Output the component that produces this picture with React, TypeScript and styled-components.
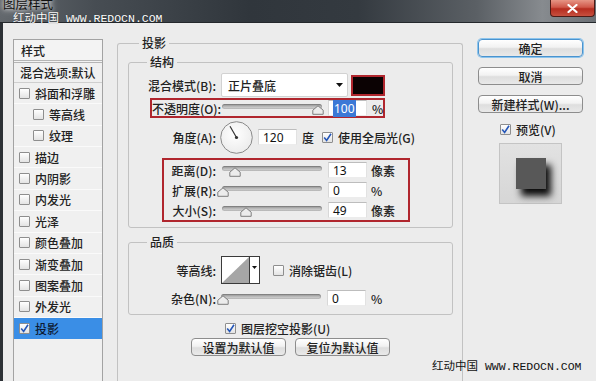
import React from 'react';
import styled, { createGlobalStyle } from 'styled-components';

const FONT = `"Noto Sans CJK SC", "Noto Sans", sans-serif`;

const GlobalStyle = createGlobalStyle`
  html, body { margin: 0; padding: 0; background: #ececec; }
  body { width: 596px; height: 381px; overflow: hidden; font-family: ${FONT}; }
  * { box-sizing: border-box; }
`;

const Window = styled.div`
  position: relative;
  width: 596px;
  height: 381px;
  overflow: hidden;
  display: flex;
  flex-direction: column;
  background: #ececec;
  font-family: ${FONT};
  font-size: 12px;
  color: #222;
`;

const TitleBar = styled.div`
  flex: none;
  height: 23px;
  display: flex;
  justify-content: space-between;
  align-items: flex-start;
  background: linear-gradient(90deg, #63686d 0%, #474d53 16%, #30363c 42%, #343a40 60%, #5b6065 80%, #878b8f 91%, #6b7075 100%);
  border-bottom: 1px solid #24282c;
`;

const TitleText = styled.div`
  margin: -3px 0 0 3px;
  font-size: 12.5px;
  line-height: 14px;
  color: #111;
  text-shadow: 0 0 4px #fff, 0 0 8px rgba(255, 255, 255, 0.8);
`;

const CloseButton = styled.div`
  width: 45px;
  height: 17px;
  margin-right: 1px;
  display: flex;
  align-items: center;
  justify-content: center;
  border: 1px solid #4e1b16;
  border-top: none;
  border-radius: 0 0 4px 4px;
  background: linear-gradient(#e69585 0%, #d0584a 45%, #b62c1f 55%, #c7503f 100%);
`;

const Watermark = styled.div<{ $light?: boolean }>`
  position: absolute;
  white-space: pre;
  font-size: 11.5px;
  line-height: 13px;
  color: ${(p) => (p.$light ? '#fff' : '#111')};
  text-shadow: ${(p) => (p.$light ? '0 0 1px rgba(0,0,0,0.6)' : 'none')};
`;

const MarkCjk = styled.span`
  font-family: "Noto Sans CJK SC", sans-serif;
`;

const MarkLatin = styled.span`
  font-family: "Liberation Mono", monospace;
`;

const Body = styled.div`
  flex: 1;
  min-height: 0;
  display: flex;
  align-items: flex-start;
  border-left: 3px solid #2c3035;
`;

/* ---------- Sidebar ---------- */
const Sidebar = styled.div`
  flex: none;
  width: 90px;
  min-height: 400px;
  margin: 16px 0 0 10px;
  border: 1px solid #a3a3a3;
  background: #f0f0f0;
`;

const SideHeader = styled.div`
  height: 23px;
  padding-left: 7px;
  display: flex;
  align-items: center;
  font-weight: 500;
  border-bottom: 3px double #b5b5b5;
  background: #f3f3f3;
`;

const SideBlend = styled.div`
  height: 20px;
  padding-left: 6px;
  display: flex;
  align-items: center;
  font-weight: 500;
  white-space: nowrap;
  border-bottom: 1px solid #cfcfcf;
`;

const SideItem = styled.div<{ $indent?: boolean; $selected?: boolean }>`
  height: 21.36px;
  padding-left: ${(p) => (p.$indent ? 19 : 5)}px;
  display: flex;
  align-items: center;
  gap: 5px;
  font-weight: 500;
  white-space: nowrap;
  border-bottom: 1px solid ${(p) => (p.$selected ? '#3a8ee6' : '#fafafa')};
  background: ${(p) => (p.$selected ? '#3a8ee6' : 'transparent')};
  color: ${(p) => (p.$selected ? '#0d1a33' : '#222')};
`;

/* ---------- Checkbox ---------- */
const Box = styled.span`
  flex: none;
  width: 11px;
  height: 11px;
  display: inline-flex;
  align-items: center;
  justify-content: center;
  border: 1px solid #8e8e8e;
  border-radius: 1px;
  background: linear-gradient(#ffffff, #e3e3e3);
`;

const Check: React.FC<{ checked?: boolean }> = ({ checked }) => (
  <Box>
    {checked && (
      <svg width="9" height="9" viewBox="0 0 9 9">
        <path d="M1.2 4.6 L3.6 7.4 L8 0.8" fill="none" stroke="#2456b8" strokeWidth="1.6" />
      </svg>
    )}
  </Box>
);

/* ---------- Main area ---------- */
const Main = styled.div`
  flex: none;
  width: 346px;
  margin: 20px 0 0 14px;
`;

const OuterGroup = styled.div`
  display: flex;
  flex-direction: column;
  min-height: 380px;
  padding: 0 9px 0 10px;
  border: 1px solid #c2c2c2;
  border-bottom: none;
  border-radius: 3px 3px 0 0;
`;

const GroupTitle = styled.div<{ $offset: number }>`
  align-self: flex-start;
  height: 16px;
  line-height: 16px;
  margin: -9px 0 0 ${(p) => p.$offset}px;
  padding: 0 3px;
  background: #ececec;
  font-weight: 500;
`;

const InnerGroup = styled.div<{ $top: number; $bottom: number }>`
  display: flex;
  flex-direction: column;
  margin-top: ${(p) => p.$top}px;
  padding-bottom: ${(p) => p.$bottom}px;
  border: 1px solid #c2c2c2;
  border-radius: 3px;
`;

const Row = styled.div<{ $top?: number; $h: number }>`
  display: flex;
  align-items: center;
  height: ${(p) => p.$h}px;
  margin-top: ${(p) => p.$top ?? 0}px;
  white-space: nowrap;
`;

const Label = styled.span<{ $w: number }>`
  flex: none;
  width: ${(p) => p.$w}px;
  text-align: right;
  font-weight: 500;
`;

const Annot = styled.div<{ $left: number; $w: number; $h: number; $top: number }>`
  display: flex;
  flex-direction: column;
  margin: ${(p) => p.$top}px 0 0 ${(p) => p.$left}px;
  width: ${(p) => p.$w}px;
  height: ${(p) => p.$h}px;
  border: 2px solid #b0262e;
`;

const Gap = styled.span<{ $w: number }>`
  flex: none;
  width: ${(p) => p.$w}px;
`;

const Dropdown = styled.div`
  flex: none;
  width: 127px;
  height: 24px;
  display: flex;
  align-items: center;
  justify-content: space-between;
  padding: 0 4px 0 6px;
  background: #fff;
  border: 1px solid #d2d2d2;
  border-radius: 2px;
  font-weight: 500;
`;

const Swatch = styled.div`
  flex: none;
  width: 34px;
  height: 21px;
  border: 2px solid #b0262e;
  background: #0b0203;
`;

const Field = styled.div<{ $w?: number }>`
  flex: none;
  width: ${(p) => p.$w ?? 39}px;
  height: 16px;
  padding-left: 4px;
  line-height: 15px;
  background: #fff;
  border: 1px solid;
  border-color: #bdbdbd #e2e2e2 #ececec #d8d8d8;
  font-family: "Noto Sans", sans-serif;
  font-size: 12px;
  color: #111;
`;

const Selected = styled.span`
  background: #3b78d6;
  color: #fff;
  padding: 0 1px;
`;

const Unit = styled.span`
  font-weight: 500;
`;

const SliderWrap = styled.div`
  flex: none;
  position: relative;
  width: 100px;
  height: 14px;
`;

const Track = styled.div`
  margin-top: 3px;
  height: 5px;
  border-radius: 3px;
  background: linear-gradient(#8a8a8a, #b9b9b9 50%, #dadada);
  box-shadow: inset 0 0 0 1px rgba(0, 0, 0, 0.12);
`;

const Thumb = styled.svg`
  position: absolute;
  bottom: 0;
`;

const Slider: React.FC<{ value: number }> = ({ value }) => (
  <SliderWrap>
    <Track />
    <Thumb width="12" height="10" viewBox="0 0 12 10" style={{ left: `calc(${value}% - 6px)` }}>
      <path d="M6 0.8 L11.2 5.2 L11.2 9.3 L0.8 9.3 L0.8 5.2 Z" fill="#ececec" stroke="#7e7e7e" strokeWidth="1" />
    </Thumb>
  </SliderWrap>
);

const Dial = () => (
  <svg width="33" height="33" viewBox="0 0 33 33">
    <defs>
      <radialGradient id="dialg" cx="45%" cy="40%" r="60%">
        <stop offset="0" stopColor="#ffffff" />
        <stop offset="1" stopColor="#ececec" />
      </radialGradient>
    </defs>
    <circle cx="16.5" cy="16.5" r="15.8" fill="url(#dialg)" stroke="#8a8a8a" strokeWidth="1" />
    <line x1="16.5" y1="16.5" x2="10" y2="5.3" stroke="#333" strokeWidth="1.2" />
    <circle cx="16.5" cy="16.5" r="1.6" fill="#333" />
  </svg>
);

const ContourBox = styled.div`
  flex: none;
  width: 39px;
  height: 28px;
  display: flex;
  border: 1px solid #3a3a3a;
  background: #fff;
`;

const ContourArrow = styled.div`
  flex: none;
  width: 10px;
  display: flex;
  justify-content: center;
  padding-top: 9px;
  border-left: 1px solid #3a3a3a;
`;

const Contour = () => (
  <ContourBox>
    <svg width="27" height="26" viewBox="0 0 27 26">
      <polygon points="0,26 27,0 27,26" fill="#a6a6a6" />
    </svg>
    <ContourArrow>
      <svg width="5" height="3" viewBox="0 0 5 3">
        <polygon points="0,0 5,0 2.5,3" fill="#111" />
      </svg>
    </ContourArrow>
  </ContourBox>
);

const CheckLabel = styled.span`
  margin-left: 5px;
  font-weight: 500;
`;

const ButtonRow = styled.div`
  display: flex;
  justify-content: center;
  gap: 9px;
  margin-top: 2px;
`;

const Button = styled.div<{ $w: number; $primary?: boolean }>`
  flex: none;
  width: ${(p) => p.$w}px;
  height: 18px;
  display: flex;
  align-items: center;
  justify-content: center;
  border: 1px solid ${(p) => (p.$primary ? '#4a93cf' : '#8d8d8d')};
  border-radius: 4px;
  background: linear-gradient(#ffffff, #f2f2f2 45%, #dedede 55%, #e9e9e9);
  box-shadow: ${(p) => (p.$primary ? '0 0 0 1px #8cc4ec' : 'none')};
  font-weight: 500;
  white-space: nowrap;
  color: #222;
`;

/* ---------- Right column ---------- */
const Side = styled.div`
  flex: none;
  width: 105px;
  margin: 16px 0 0 15px;
  display: flex;
  flex-direction: column;
  gap: 10px;
`;

const PreviewRow = styled.div`
  display: flex;
  align-items: center;
  height: 16px;
  margin: -2px 0 0 22px;
`;

const PreviewBox = styled.div`
  width: 63px;
  height: 61px;
  margin: -4px 0 0 21px;
  display: flex;
  align-items: center;
  justify-content: center;
  border: 1px solid #c4c4c4;
  background: linear-gradient(#e2e2e2, #d6d6d6);
`;

const PreviewSquare = styled.div`
  width: 30px;
  height: 31px;
  background: #585858;
  box-shadow: 5px 7px 7px rgba(0, 0, 0, 0.95);
`;

const sideItems: { label: string; indent?: boolean; checked?: boolean }[] = [
  { label: '斜面和浮雕' },
  { label: '等高线', indent: true },
  { label: '纹理', indent: true },
  { label: '描边' },
  { label: '内阴影' },
  { label: '内发光' },
  { label: '光泽' },
  { label: '颜色叠加' },
  { label: '渐变叠加' },
  { label: '图案叠加' },
  { label: '外发光' },
  { label: '投影', checked: true },
];

const CloseIcon = () => (
  <svg width="11" height="9" viewBox="0 0 11 9">
    <path d="M1.5 1 L9.5 8 M9.5 1 L1.5 8" stroke="#fff" strokeWidth="2.2" strokeLinecap="round" />
  </svg>
);

const DownArrow = () => (
  <svg width="7" height="4" viewBox="0 0 7 4">
    <polygon points="0,0 7,0 3.5,4" fill="#111" />
  </svg>
);

export default function App() {
  return (
    <Window>
      <GlobalStyle />
      <TitleBar>
        <TitleText>图层样式</TitleText>
        <CloseButton>
          <CloseIcon />
        </CloseButton>
      </TitleBar>
      <Body>
        <Sidebar>
          <SideHeader>样式</SideHeader>
          <SideBlend>混合选项:默认</SideBlend>
          {sideItems.map((it) => (
            <SideItem key={it.label} $indent={it.indent} $selected={it.checked}>
              <Check checked={it.checked} />
              {it.label}
            </SideItem>
          ))}
        </Sidebar>

        <Main>
          <OuterGroup>
            <GroupTitle $offset={11}>投影</GroupTitle>
            <InnerGroup $top={11} $bottom={5}>
              <GroupTitle $offset={18}>结构</GroupTitle>
              <Row $top={3} $h={24}>
                <Label $w={87}>混合模式(B):</Label>
                <Gap $w={5} />
                <Dropdown>
                  正片叠底
                  <DownArrow />
                </Dropdown>
                <Gap $w={3} />
                <Swatch />
              </Row>
              <Annot $top={1} $left={21} $w={235} $h={20}>
                <Row $h={16}>
                  <Label $w={64}>不透明度(O):</Label>
                  <Gap $w={6} />
                  <Slider value={96} />
                  <Gap $w={6} />
                  <Field>
                    <Selected>100</Selected>
                  </Field>
                  <Gap $w={5} />
                  <Unit>%</Unit>
                </Row>
              </Annot>
              <Row $top={3} $h={32}>
                <Label $w={87}>角度(A):</Label>
                <Gap $w={4} />
                <Dial />
                <Gap $w={5} />
                <Field>120</Field>
                <Gap $w={5} />
                <Unit>度</Unit>
                <Gap $w={8} />
                <Check checked />
                <CheckLabel>使用全局光(G)</CheckLabel>
              </Row>
              <Annot $top={5} $left={33} $w={248} $h={64}>
                <Row $h={20}>
                  <Label $w={52}>距离(D):</Label>
                  <Gap $w={6} />
                  <Slider value={13} />
                  <Gap $w={6} />
                  <Field>13</Field>
                  <Gap $w={4} />
                  <Unit>像素</Unit>
                </Row>
                <Row $h={20}>
                  <Label $w={52}>扩展(R):</Label>
                  <Gap $w={6} />
                  <Slider value={1} />
                  <Gap $w={6} />
                  <Field>0</Field>
                  <Gap $w={4} />
                  <Unit>%</Unit>
                </Row>
                <Row $h={20}>
                  <Label $w={52}>大小(S):</Label>
                  <Gap $w={6} />
                  <Slider value={24} />
                  <Gap $w={6} />
                  <Field>49</Field>
                  <Gap $w={4} />
                  <Unit>像素</Unit>
                </Row>
              </Annot>
            </InnerGroup>

            <InnerGroup $top={14} $bottom={7}>
              <GroupTitle $offset={18}>品质</GroupTitle>
              <Row $top={6} $h={28}>
                <Label $w={87}>等高线:</Label>
                <Gap $w={5} />
                <Contour />
                <Gap $w={13} />
                <Check />
                <CheckLabel>消除锯齿(L)</CheckLabel>
              </Row>
              <Row $top={5} $h={18}>
                <Label $w={87}>杂色(N):</Label>
                <Gap $w={5} />
                <Slider value={2} />
                <Gap $w={6} />
                <Field>0</Field>
                <Gap $w={5} />
                <Unit>%</Unit>
              </Row>
            </InnerGroup>

            <Row $top={5} $h={16}>
              <Gap $w={97} />
              <Check checked />
              <CheckLabel>图层挖空投影(U)</CheckLabel>
            </Row>
            <ButtonRow>
              <Button $w={95}>设置为默认值</Button>
              <Button $w={95}>复位为默认值</Button>
            </ButtonRow>
          </OuterGroup>
        </Main>

        <Side>
          <Button $w={105} $primary>确定</Button>
          <Button $w={105}>取消</Button>
          <Button $w={105}>新建样式(W)...</Button>
          <PreviewRow>
            <Check checked />
            <CheckLabel>预览(V)</CheckLabel>
          </PreviewRow>
          <PreviewBox>
            <PreviewSquare />
          </PreviewBox>
        </Side>
      </Body>

      <Watermark $light style={{ left: 13, top: 11 }}>
        <MarkCjk>红动中国</MarkCjk>
        <MarkLatin> WWW.REDOCN.COM</MarkLatin>
      </Watermark>
      <Watermark style={{ left: 432, top: 359 }}>
        <MarkCjk>红动中国</MarkCjk>
        <MarkLatin> WWW.REDOCN.COM</MarkLatin>
      </Watermark>
    </Window>
  );
}
